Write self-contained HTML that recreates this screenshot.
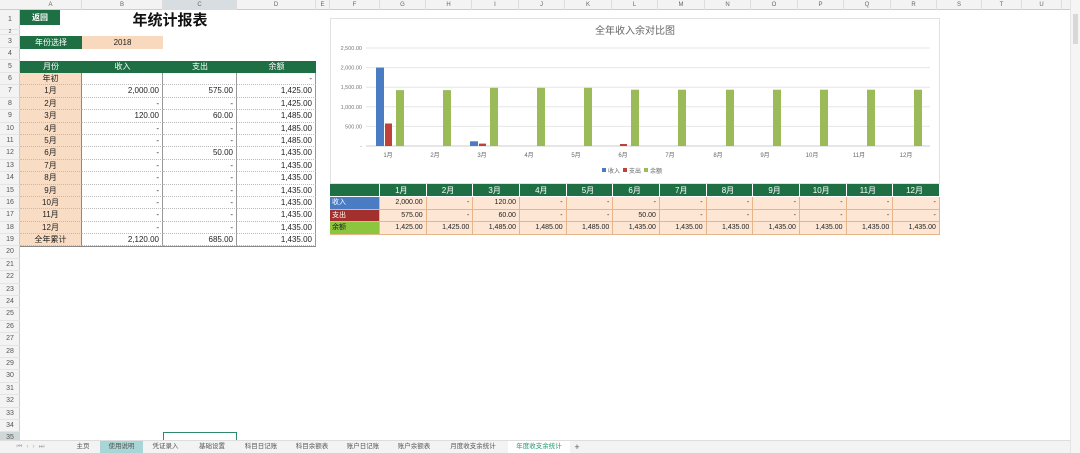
<!DOCTYPE html>
<html><head><meta charset="utf-8"><style>
*{margin:0;padding:0;box-sizing:border-box}
body{width:1080px;height:453px;overflow:hidden;background:#fff;font-family:"Liberation Sans","Noto Sans CJK SC",sans-serif;position:relative;color:#222}
.a{position:absolute}
.ch{position:absolute;top:0;height:10px;font-size:6px;color:#666;text-align:center;line-height:10px;border-right:1px solid #ddd}
.rn{position:absolute;left:0;width:20px;font-size:7px;color:#555;text-align:center;border-bottom:1px solid #e4e4e4}
.lt{position:absolute;left:20px;top:73px;width:296px;border-bottom:1px solid #888}
.lt .r{display:flex;height:12.4px;font-size:8px;line-height:12px}
.lt .r div{border-right:1px solid #999;border-bottom:1px dotted #bbb;text-align:right;padding-right:3px}
.lt .r div:first-child{width:62px;background:#f9dcc4;text-align:center;padding:0;border-right:1px solid #888}
.c1{width:81px}.c2{width:74px}.c3{width:79px}
.bt{position:absolute;left:330px;top:184px;width:610px;font-size:7px}
.bt .r{display:flex;height:12.5px;line-height:12px}
.bt .r div{width:46.67px;text-align:right;padding-right:3px;border-right:1px solid #e6b58a;border-bottom:1px solid #e6b58a;background:#fde6d3}
.bt .r div:first-child{width:50px;text-align:left;padding-left:2px;color:#fff}
.bt .h div{background:#1f6f45 !important;color:#fff;text-align:center !important;border-color:#fff;font-size:8px}
.tab{position:absolute;top:441px;height:12px;font-size:6.5px;line-height:12px;color:#555;text-align:center}
</style></head><body>
<div class="a" style="left:0;top:0;width:1080px;height:10px;background:#f3f3f3;border-bottom:1px solid #ccc"></div>
<div class="ch" style="left:20px;width:62px">A</div>
<div class="ch" style="left:82px;width:81px">B</div>
<div class="ch" style="left:163px;width:74px;background:#d7dde0">C</div>
<div class="ch" style="left:237px;width:79px">D</div>
<div class="ch" style="left:316px;width:14px">E</div>
<div class="ch" style="left:330px;width:50px">F</div>
<div class="ch" style="left:380px;width:46px">G</div>
<div class="ch" style="left:426px;width:46px">H</div>
<div class="ch" style="left:472px;width:47px">I</div>
<div class="ch" style="left:519px;width:46px">J</div>
<div class="ch" style="left:565px;width:47px">K</div>
<div class="ch" style="left:612px;width:46px">L</div>
<div class="ch" style="left:658px;width:47px">M</div>
<div class="ch" style="left:705px;width:46px">N</div>
<div class="ch" style="left:751px;width:47px">O</div>
<div class="ch" style="left:798px;width:46px">P</div>
<div class="ch" style="left:844px;width:47px">Q</div>
<div class="ch" style="left:891px;width:46px">R</div>
<div class="ch" style="left:937px;width:45px">S</div>
<div class="ch" style="left:982px;width:40px">T</div>
<div class="ch" style="left:1022px;width:40px">U</div>
<div class="a" style="left:1070px;top:0;width:10px;height:453px;background:#f5f5f5;border-left:1px solid #e4e4e4"></div>
<div class="a" style="left:1073px;top:14px;width:5px;height:30px;background:#d8d8d8"></div>
<div class="a" style="left:0;top:10px;width:20px;height:443px;background:#f3f3f3;border-right:1px solid #ccc"></div>
<div class="rn" style="top:10px;height:20px;line-height:20px">1</div>
<div class="rn" style="top:30px;height:5px;line-height:5px;font-size:5px">2</div>
<div class="rn" style="top:35px;height:13px;line-height:13px">3</div>
<div class="rn" style="top:48px;height:12px;line-height:12px">4</div>
<div class="rn" style="top:60px;height:13px;line-height:13px">5</div>
<div class="a" style="left:0;top:73px;width:20px">
<div class="rn" style="position:static;height:12.4px;line-height:12px">6</div><div class="rn" style="position:static;height:12.4px;line-height:12px">7</div><div class="rn" style="position:static;height:12.4px;line-height:12px">8</div><div class="rn" style="position:static;height:12.4px;line-height:12px">9</div><div class="rn" style="position:static;height:12.4px;line-height:12px">10</div><div class="rn" style="position:static;height:12.4px;line-height:12px">11</div><div class="rn" style="position:static;height:12.4px;line-height:12px">12</div><div class="rn" style="position:static;height:12.4px;line-height:12px">13</div><div class="rn" style="position:static;height:12.4px;line-height:12px">14</div><div class="rn" style="position:static;height:12.4px;line-height:12px">15</div><div class="rn" style="position:static;height:12.4px;line-height:12px">16</div><div class="rn" style="position:static;height:12.4px;line-height:12px">17</div><div class="rn" style="position:static;height:12.4px;line-height:12px">18</div><div class="rn" style="position:static;height:12.4px;line-height:12px">19</div><div class="rn" style="position:static;height:12.4px;line-height:12px">20</div><div class="rn" style="position:static;height:12.4px;line-height:12px">21</div><div class="rn" style="position:static;height:12.4px;line-height:12px">22</div><div class="rn" style="position:static;height:12.4px;line-height:12px">23</div><div class="rn" style="position:static;height:12.4px;line-height:12px">24</div><div class="rn" style="position:static;height:12.4px;line-height:12px">25</div><div class="rn" style="position:static;height:12.4px;line-height:12px">26</div><div class="rn" style="position:static;height:12.4px;line-height:12px">27</div><div class="rn" style="position:static;height:12.4px;line-height:12px">28</div><div class="rn" style="position:static;height:12.4px;line-height:12px">29</div><div class="rn" style="position:static;height:12.4px;line-height:12px">30</div><div class="rn" style="position:static;height:12.4px;line-height:12px">31</div><div class="rn" style="position:static;height:12.4px;line-height:12px">32</div><div class="rn" style="position:static;height:12.4px;line-height:12px">33</div><div class="rn" style="position:static;height:12.4px;line-height:12px">34</div><div class="rn" style="position:static;height:12.4px;line-height:12px;background:#cfd8d8">35</div>
</div>
<div class="a" style="left:20px;top:10px;width:40px;height:15px;background:#1f6f45;color:#fff;font-size:8px;line-height:15px;text-align:center;font-weight:bold">返回</div>
<div class="a" style="left:110px;top:10px;width:120px;height:20px;font-size:15px;font-weight:bold;text-align:center;line-height:22px;color:#111">年统计报表</div>
<div class="a" style="left:20px;top:36px;width:62px;height:13px;background:#1f6f45;color:#fff;font-size:8px;line-height:13px;text-align:center">年份选择</div>
<div class="a" style="left:82px;top:36px;width:81px;height:13px;background:#f9d9bd;font-size:8px;line-height:13px;text-align:center">2018</div>
<div class="a" style="left:20px;top:61px;width:296px;height:12px;background:#1f6f45;color:#fff;font-size:8px;line-height:12px;display:flex;text-align:center">
<div style="width:62px">月份</div><div style="width:81px">收入</div><div style="width:74px">支出</div><div style="width:79px">余额</div></div>
<div class="lt">
<div class="r"><div>年初</div><div class="c1"></div><div class="c2"></div><div class="c3">-</div></div>
<div class="r"><div>1月</div><div class="c1">2,000.00</div><div class="c2">575.00</div><div class="c3">1,425.00</div></div>
<div class="r"><div>2月</div><div class="c1">-</div><div class="c2">-</div><div class="c3">1,425.00</div></div>
<div class="r"><div>3月</div><div class="c1">120.00</div><div class="c2">60.00</div><div class="c3">1,485.00</div></div>
<div class="r"><div>4月</div><div class="c1">-</div><div class="c2">-</div><div class="c3">1,485.00</div></div>
<div class="r"><div>5月</div><div class="c1">-</div><div class="c2">-</div><div class="c3">1,485.00</div></div>
<div class="r"><div>6月</div><div class="c1">-</div><div class="c2">50.00</div><div class="c3">1,435.00</div></div>
<div class="r"><div>7月</div><div class="c1">-</div><div class="c2">-</div><div class="c3">1,435.00</div></div>
<div class="r"><div>8月</div><div class="c1">-</div><div class="c2">-</div><div class="c3">1,435.00</div></div>
<div class="r"><div>9月</div><div class="c1">-</div><div class="c2">-</div><div class="c3">1,435.00</div></div>
<div class="r"><div>10月</div><div class="c1">-</div><div class="c2">-</div><div class="c3">1,435.00</div></div>
<div class="r"><div>11月</div><div class="c1">-</div><div class="c2">-</div><div class="c3">1,435.00</div></div>
<div class="r"><div>12月</div><div class="c1">-</div><div class="c2">-</div><div class="c3">1,435.00</div></div>
<div class="r"><div>全年累计</div><div class="c1">2,120.00</div><div class="c2">685.00</div><div class="c3">1,435.00</div></div>
</div>
<svg class="a" style="left:330px;top:18px" width="610" height="166" font-family="Liberation Sans, Noto Sans CJK SC, sans-serif">
<rect x="0.5" y="0.5" width="609" height="165" fill="#fff" stroke="#e2e2e2"/>
<text x="305" y="16" font-size="10" fill="#666" text-anchor="middle">全年收入余对比图</text>
<g stroke="#e6e6e6" stroke-width="1">
<line x1="36" y1="30" x2="600" y2="30"/><line x1="36" y1="49.6" x2="600" y2="49.6"/><line x1="36" y1="69.2" x2="600" y2="69.2"/><line x1="36" y1="88.8" x2="600" y2="88.8"/><line x1="36" y1="108.4" x2="600" y2="108.4"/></g>
<line x1="36" y1="128" x2="600" y2="128" stroke="#ccc"/>
<g font-size="5.5" fill="#777" text-anchor="end">
<text x="32" y="32">2,500.00</text><text x="32" y="51.6">2,000.00</text><text x="32" y="71.2">1,500.00</text><text x="32" y="90.8">1,000.00</text><text x="32" y="110.4">500.00</text><text x="32" y="130">-</text></g>
<g fill="#4a7cc3"><rect x="46" y="49.6" width="8" height="78.4"/><rect x="140" y="123.3" width="8" height="4.7"/></g>
<g fill="#c0413b"><rect x="55" y="105.5" width="7" height="22.5"/><rect x="149" y="125.6" width="7" height="2.4"/><rect x="290" y="126" width="7" height="2"/></g>
<g fill="#9bbb59">
<rect x="66" y="72.1" width="8" height="55.9"/><rect x="113" y="72.1" width="8" height="55.9"/><rect x="160" y="69.8" width="8" height="58.2"/><rect x="207" y="69.8" width="8" height="58.2"/><rect x="254" y="69.8" width="8" height="58.2"/><rect x="301" y="71.7" width="8" height="56.3"/><rect x="348" y="71.7" width="8" height="56.3"/><rect x="396" y="71.7" width="8" height="56.3"/><rect x="443" y="71.7" width="8" height="56.3"/><rect x="490" y="71.7" width="8" height="56.3"/><rect x="537" y="71.7" width="8" height="56.3"/><rect x="584" y="71.7" width="8" height="56.3"/></g>
<g font-size="6" fill="#666" text-anchor="middle">
<text x="58" y="139">1月</text><text x="105" y="139">2月</text><text x="152" y="139">3月</text><text x="199" y="139">4月</text><text x="246" y="139">5月</text><text x="293" y="139">6月</text><text x="340" y="139">7月</text><text x="388" y="139">8月</text><text x="435" y="139">9月</text><text x="482" y="139">10月</text><text x="529" y="139">11月</text><text x="576" y="139">12月</text></g>
<g font-size="6" fill="#666"><rect x="272" y="150" width="4" height="4" fill="#4a7cc3"/><text x="278" y="155">收入</text><rect x="293" y="150" width="4" height="4" fill="#c0413b"/><text x="299" y="155">支出</text><rect x="314" y="150" width="4" height="4" fill="#9bbb59"/><text x="320" y="155">余额</text></g>
</svg>
<div class="bt">
<div class="r h" style="height:13px;line-height:13px"><div></div><div>1月</div><div>2月</div><div>3月</div><div>4月</div><div>5月</div><div>6月</div><div>7月</div><div>8月</div><div>9月</div><div>10月</div><div>11月</div><div>12月</div></div>
<div class="r"><div style="background:#4a7cc3">收入</div><div>2,000.00</div><div>-</div><div>120.00</div><div>-</div><div>-</div><div>-</div><div>-</div><div>-</div><div>-</div><div>-</div><div>-</div><div>-</div></div>
<div class="r"><div style="background:#a3302c">支出</div><div>575.00</div><div>-</div><div>60.00</div><div>-</div><div>-</div><div>50.00</div><div>-</div><div>-</div><div>-</div><div>-</div><div>-</div><div>-</div></div>
<div class="r"><div style="background:#8cc63f;color:#222">余额</div><div>1,425.00</div><div>1,425.00</div><div>1,485.00</div><div>1,485.00</div><div>1,485.00</div><div>1,435.00</div><div>1,435.00</div><div>1,435.00</div><div>1,435.00</div><div>1,435.00</div><div>1,435.00</div><div>1,435.00</div></div>
</div>
<div class="a" style="left:163px;top:432px;width:74px;height:10px;border:1px solid #2e8b6a"></div>
<div class="a" style="left:0;top:440px;width:1070px;height:13px;background:#f3f3f3;border-top:1px solid #ddd"></div>
<div class="tab" style="left:5px;width:55px;color:#aaa;letter-spacing:4px">⏮‹›⏭</div>
<div class="tab" style="left:66px;width:34px">主页</div>
<div class="tab" style="left:100px;width:43px;background:#a8d6d6">使用说明</div>
<div class="tab" style="left:143px;width:45px">凭证录入</div>
<div class="tab" style="left:188px;width:48px">基础设置</div>
<div class="tab" style="left:236px;width:50px">科目日记账</div>
<div class="tab" style="left:286px;width:52px">科目余额表</div>
<div class="tab" style="left:338px;width:50px">账户日记账</div>
<div class="tab" style="left:388px;width:52px">账户余额表</div>
<div class="tab" style="left:440px;width:66px">月度收支余统计</div>
<div class="tab" style="left:508px;width:62px;background:#fff;color:#1f9a6a">年度收支余统计</div>
<div class="tab" style="left:570px;width:14px;font-size:9px">+</div>
</body></html>
